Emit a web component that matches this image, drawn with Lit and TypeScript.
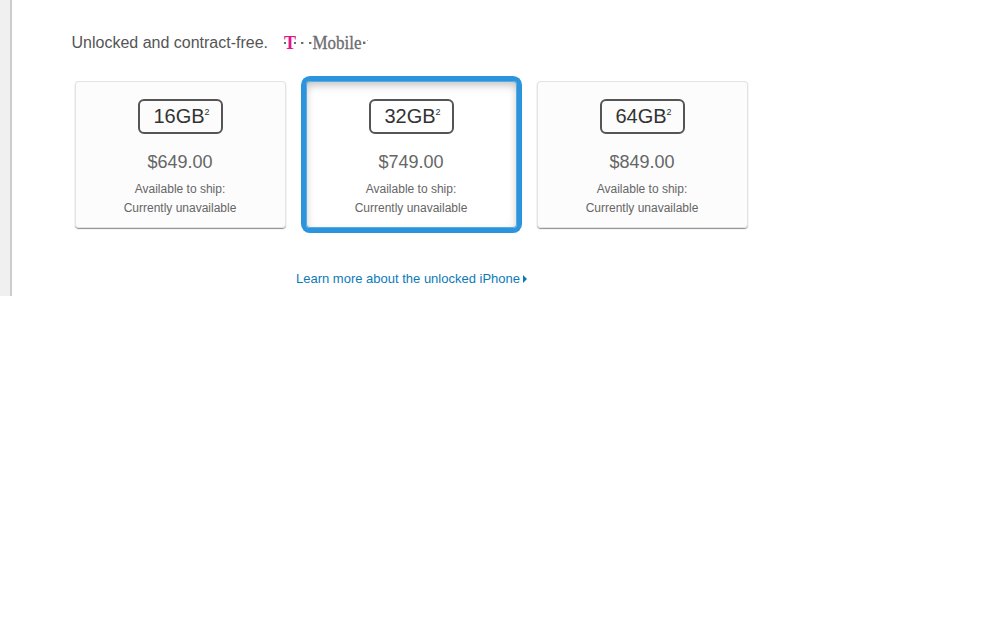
import { LitElement, html, css } from 'lit';
import { customElement, property } from 'lit/decorators.js';

interface Model {
    capacity: string;
    price: string;
    selected?: boolean;
}

const MODELS: Model[] = [
    { capacity: '16GB', price: '$649.00' },
    { capacity: '32GB', price: '$749.00', selected: true },
    { capacity: '64GB', price: '$849.00' },
];

/**
 * Carrier logo
 */
@customElement('carrier-logo')
export class CarrierLogo extends LitElement {

    static styles = css`
        :host {
            display: block;
            width: 86px;
            height: 20px;
        }
        svg {
            display: block;
        }
        text {
            font-family: "Liberation Serif", "Times New Roman", serif;
        }
        .mark {
            fill: #e2148a;
            font-size: 18px;
            font-weight: bold;
        }
        .name {
            fill: #6c6c70;
            stroke: #6c6c70;
            stroke-width: 0.3;
            font-size: 18px;
        }
        rect {
            fill: #6c6c70;
        }
    `;

    render() {
        return html`
            <svg width="86" height="20" viewBox="0 0 86 20">
                <text class="mark" x="1" y="15.5" textLength="12" lengthAdjust="spacingAndGlyphs">T</text>
                <rect x="1" y="9" width="2" height="2"/>
                <rect x="11" y="9" width="2" height="2"/>
                <rect x="18" y="9" width="2.4" height="2"/>
                <rect x="26" y="9" width="2.4" height="2"/>
                <text class="name" x="29.5" y="15.5" textLength="49" lengthAdjust="spacingAndGlyphs">Mobile</text>
                <rect x="80" y="8.6" width="2.4" height="2.4"/>
                <rect x="84" y="7" width="1" height="1" opacity="0.5"/>
            </svg>`;
    }
}

/**
 * One selectable storage size
 */
@customElement('model-card')
export class ModelCard extends LitElement {

    static styles = css`
        :host {
            display: flex;
            flex-direction: column;
            align-items: center;
            box-sizing: border-box;
            width: 211px;
            height: 147px;
            padding-top: 18px;
            border-radius: 4px;
            background: #fcfcfc;
            box-shadow: inset 0 0 0 1px #e3e3e3, 0 1px 1px #8c8c8c;
            color: #666;
            text-align: center;
        }
        :host([selected]) {
            background: #fff;
            box-shadow: 0 0 0 5px #2b94dc, inset 0 0 0 1px #5aabe2, inset 0 4px 8px rgba(0, 0, 0, 0.25);
        }
        .capacity {
            box-sizing: border-box;
            width: 85px;
            height: 35px;
            padding-left: 2px;
            border: 2px solid #555;
            border-radius: 6px;
            color: #333;
            font-size: 20px;
            line-height: 31px;
        }
        sup {
            font-size: 9px;
            line-height: 0;
            vertical-align: 8px;
        }
        .price,
        .shipping {
            margin-left: -1px;
        }
        .price {
            margin-top: 17px;
            font-size: 18px;
            line-height: 22px;
        }
        .shipping {
            margin-top: 7px;
            font-size: 12px;
            line-height: 19px;
        }
    `;

    @property() capacity = '';
    @property() price = '';
    @property({ type: Boolean, reflect: true }) selected = false;

    render() {
        return html`
            <div class="capacity">${this.capacity}<sup>2</sup></div>
            <div class="price">${this.price}</div>
            <div class="shipping">Available to ship:<br>Currently unavailable</div>`;
    }
}

@customElement('app-root')
export class AppRoot extends LitElement {

    static styles = css`
        :host {
            display: flex;
            height: 630px;
            background: #fff;
            font-family: "Liberation Sans", Arial, sans-serif;
        }
        .edge {
            box-sizing: border-box;
            width: 12px;
            height: 296px;
            border-right: 2px solid #ccc;
            background: #f0f0f0;
        }
        main {
            width: 673px;
            padding: 33px 0 0 63px;
        }
        header {
            display: flex;
            gap: 14.5px;
            margin-left: -3.5px;
            height: 48px;
            color: #555;
            font-size: 16px;
            line-height: 20px;
        }
        .models {
            display: flex;
            gap: 20px;
        }
        .more {
            display: flex;
            align-items: center;
            justify-content: center;
            gap: 3px;
            margin-top: 41px;
            color: #0c7ab8;
            font-size: 13px;
            line-height: 20px;
            text-decoration: none;
        }
        .more svg {
            fill: #0c7ab8;
        }
    `;

    render() {
        return html`
            <div class="edge"></div>
            <main>
                <header>
                    <span>Unlocked and contract-free.</span>
                    <carrier-logo></carrier-logo>
                </header>
                <div class="models">
                    ${MODELS.map(m => html`
                        <model-card .capacity=${m.capacity} .price=${m.price} ?selected=${m.selected}></model-card>`)}
                </div>
                <a class="more" href="#">
                    <span>Learn more about the unlocked iPhone</span>
                    <svg width="4" height="8" viewBox="0 0 4 8"><path d="M0 0l4 4-4 4z"/></svg>
                </a>
            </main>`;
    }
}
